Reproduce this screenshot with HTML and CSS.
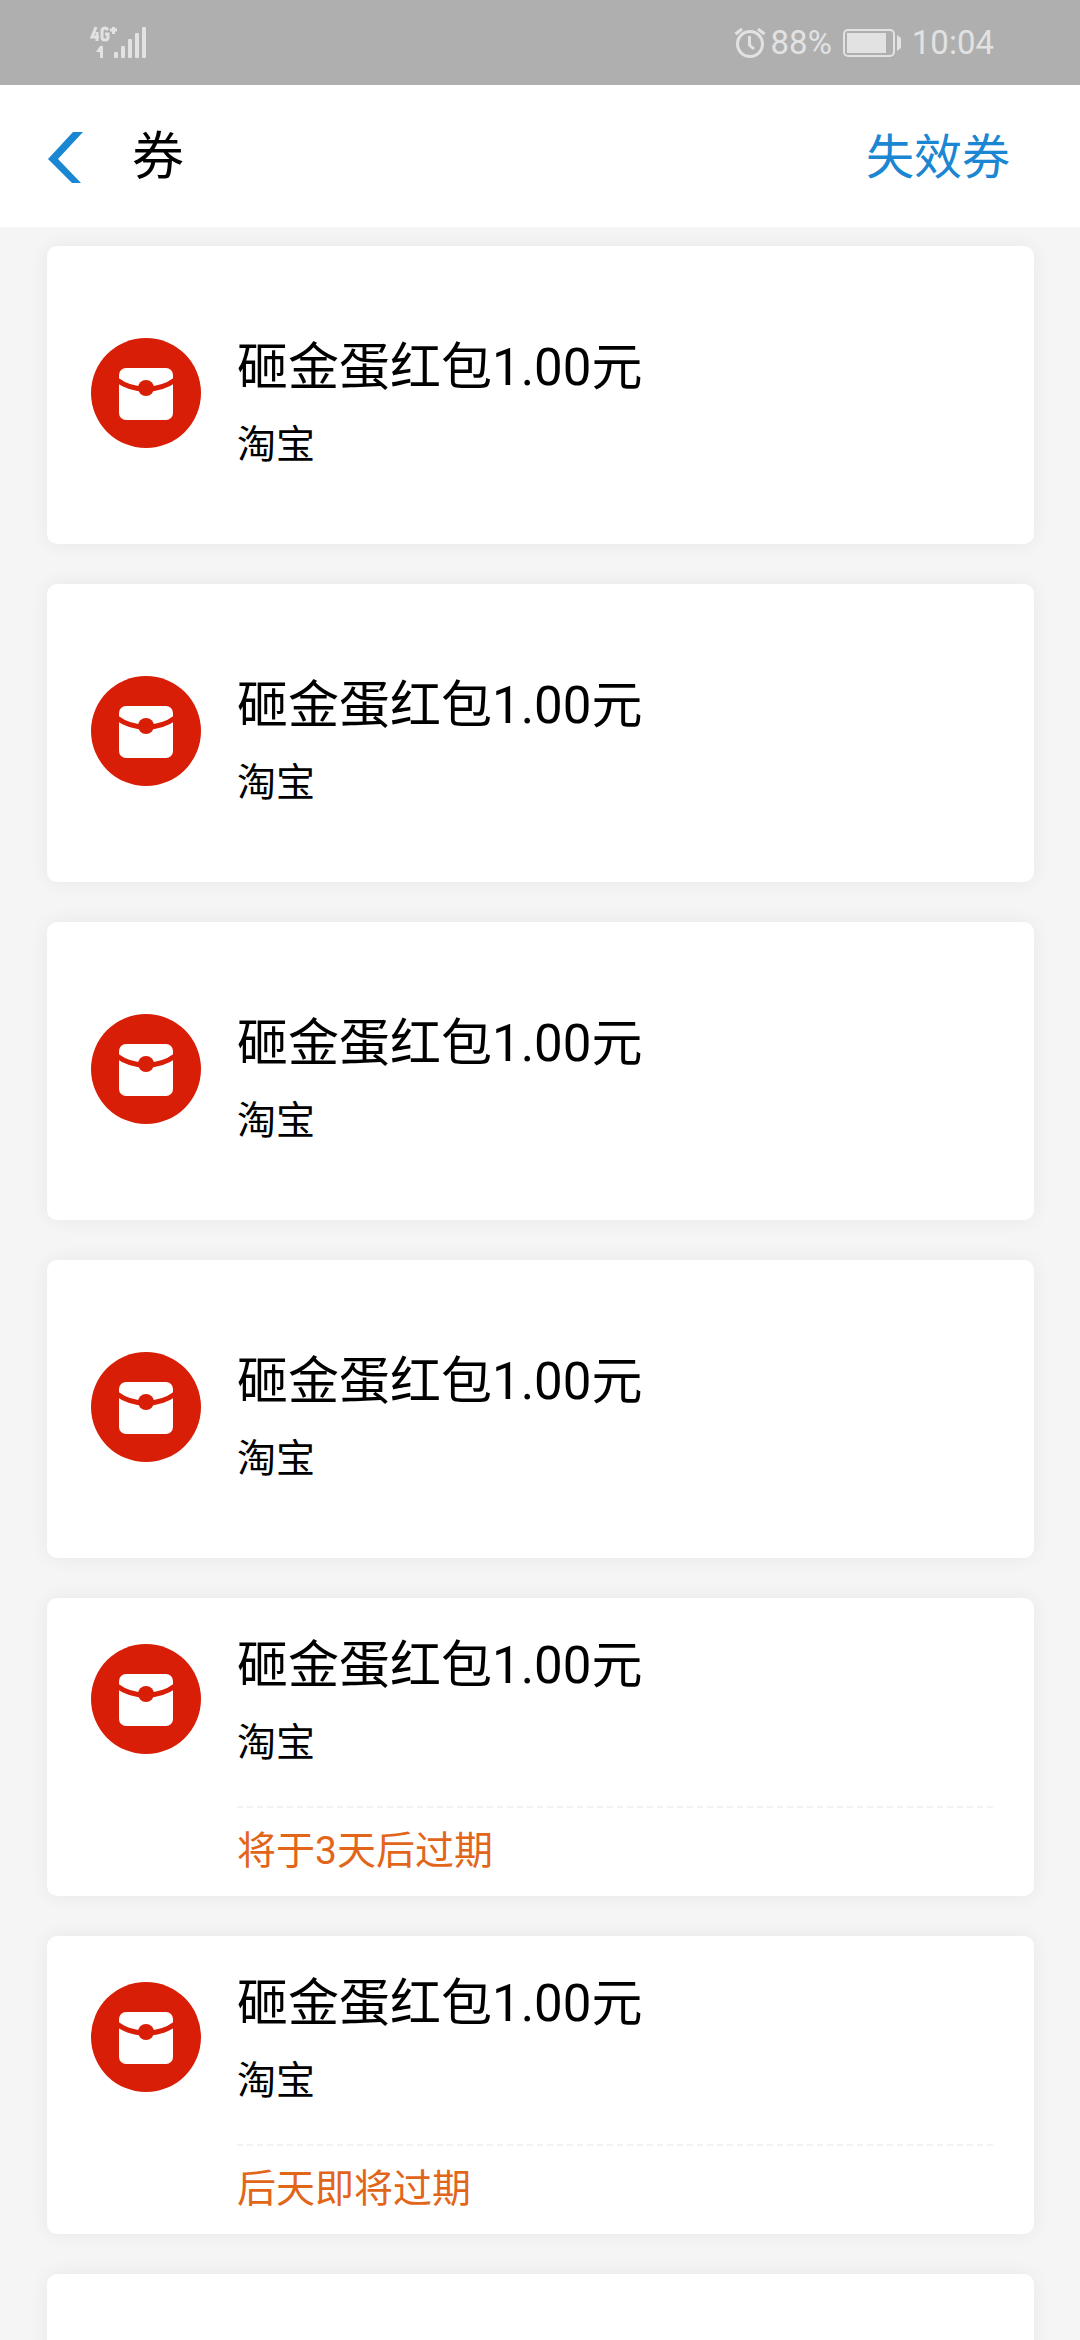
FILE: index.html
```html
<!DOCTYPE html>
<html lang="zh-CN">
<head>
<meta charset="utf-8">
<meta name="viewport" content="width=device-width, initial-scale=1">
<title>券</title>
<link rel="stylesheet" href="styles.css">
</head>
<body>
<svg class="defs" aria-hidden="true">
  <symbol id="packet" viewBox="0 0 110 110">
    <circle cx="55" cy="55" r="55" fill="#d81e06"/>
    <rect x="28" y="30" width="54" height="52" rx="7" fill="#fff"/>
    <path d="M26 42Q38 51 55 51T84 42" fill="none" stroke="#d81e06" stroke-width="5"/>
    <circle cx="55" cy="50" r="8" fill="#d81e06"/>
  </symbol>
</svg>
<div class="app">
  <div class="status">
    <svg class="signal" width="60" height="36" viewBox="0 0 60 36" fill="#e2e2e2" aria-label="4G+">
      <g fill="none" stroke="#e2e2e2" stroke-width="3">
        <path d="M8 1L4 11H11M9 6V15M20 4Q19 2 17 2Q14 2 14 5V11Q14 14 17 14Q20 14 20 11V8H17M22 4H29M25.500 1V8"/>
      </g>
      <path d="M8 26L12 20H15V32H12V26Z"/>
      <rect x="26" y="26" width="4" height="6" rx="1"/>
      <rect x="33" y="20" width="4" height="12" rx="1"/>
      <rect x="40" y="13" width="4" height="19" rx="1"/>
      <rect x="47" y="7" width="4" height="25" rx="1"/>
      <rect x="54" y="1" width="4" height="31" rx="1"/>
    </svg>
    <div class="status-info">
      <svg width="32" height="32" viewBox="0 0 32 32" fill="none" stroke="#e2e2e2" stroke-width="3" aria-hidden="true">
        <circle cx="16" cy="17" r="12.500"/>
        <path d="M15.500 9V18L20 22M1.500 7L8 2M30.500 7L24 2"/>
      </svg>
      <span>88%</span>
      <svg class="battery" width="58" height="28" viewBox="0 0 58 28" aria-hidden="true">
        <rect x="1" y="1" width="50" height="26" rx="4" fill="none" stroke="#e2e2e2" stroke-width="2"/>
        <rect x="4" y="4" width="39" height="20" fill="#e2e2e2"/>
        <path d="M54 6L58 9V19L54 22Z" fill="#e2e2e2"/>
      </svg>
      <time>10:04</time>
    </div>
  </div>

  <header class="bar">
    <button class="back" type="button" aria-label="返回">
      <svg width="36" height="52" viewBox="0 0 36 52" aria-hidden="true"><path d="M25 0H35L10 27L33 51H24L0 27Z" fill="#1b86d2"/></svg>
    </button>
    <h1>券</h1>
    <a class="expired" href="#expired">失效券</a>
  </header>

  <ul class="list">
    <li class="card">
      <svg class="icon" aria-hidden="true"><use href="#packet"/></svg>
      <div class="body"><h2>砸金蛋红包1.00元</h2><p>淘宝</p></div>
    </li>
    <li class="card">
      <svg class="icon" aria-hidden="true"><use href="#packet"/></svg>
      <div class="body"><h2>砸金蛋红包1.00元</h2><p>淘宝</p></div>
    </li>
    <li class="card">
      <svg class="icon" aria-hidden="true"><use href="#packet"/></svg>
      <div class="body"><h2>砸金蛋红包1.00元</h2><p>淘宝</p></div>
    </li>
    <li class="card">
      <svg class="icon" aria-hidden="true"><use href="#packet"/></svg>
      <div class="body"><h2>砸金蛋红包1.00元</h2><p>淘宝</p></div>
    </li>
    <li class="card expiring">
      <svg class="icon" aria-hidden="true"><use href="#packet"/></svg>
      <div class="body"><h2>砸金蛋红包1.00元</h2><p>淘宝</p><p class="due">将于3天后过期</p></div>
    </li>
    <li class="card expiring">
      <svg class="icon" aria-hidden="true"><use href="#packet"/></svg>
      <div class="body"><h2>砸金蛋红包1.00元</h2><p>淘宝</p><p class="due">后天即将过期</p></div>
    </li>
    <li class="card"></li>
  </ul>
</div>
</body>
</html>
```

FILE: styles.css
```css
* {
  box-sizing: border-box;
  margin: 0;
  padding: 0;
}

body {
  background: #f5f5f5;
  color: #000;
  font-family: Roboto, "Noto Sans CJK SC", sans-serif;
}

.defs {
  display: none;
}

.app {
  display: flex;
  flex-direction: column;
  height: 100vh;
  overflow: hidden;
}

.status {
  display: flex;
  flex: none;
  align-items: center;
  justify-content: space-between;
  height: 85px;
  padding: 0 86px 0 88px;
  background: #afafaf;
  color: #e2e2e2;
  font-size: 33px;
  line-height: 40px;
}

.signal {
  margin-top: 2px;
}

.status-info {
  display: flex;
  align-items: center;
  gap: 5px;
}

.battery {
  margin: 0 6px;
}

.bar {
  display: flex;
  flex: none;
  align-items: center;
  height: 142px;
  padding: 4px 70px 0 48px;
  background: #fff;
}

.back {
  display: flex;
  width: 84px;
  border: 0;
  background: none;
}

h1 {
  flex: 1;
  font-size: 52px;
  font-weight: 400;
  line-height: 60px;
}

.expired {
  color: #1b86d2;
  font-size: 48px;
  line-height: 60px;
  text-decoration: none;
}

.list {
  display: flex;
  flex: 1;
  flex-direction: column;
  gap: 40px;
  min-height: 0;
  padding: 19px 46px 0 47px;
  overflow: hidden;
  list-style: none;
}

.card {
  display: flex;
  flex: none;
  align-items: flex-start;
  gap: 36px;
  min-height: 298px;
  padding: 92px 41px 0 44px;
  border-radius: 10px;
  background: #fff;
  box-shadow: 0 0 20px rgba(0, 0, 0, 0.06);
}

.icon {
  flex: none;
  width: 110px;
  height: 110px;
}

.body {
  flex: 1;
}

h2 {
  font-size: 51px;
  font-weight: 400;
  line-height: 60px;
}

p {
  margin-top: 24px;
  font-size: 39px;
  line-height: 46px;
}

.expiring {
  padding-top: 38px;
}

.expiring .icon {
  margin-top: 8px;
}

.due {
  margin-top: 40px;
  padding-top: 20px;
  border-top: 2px dashed #f2f2f2;
  color: #e2661a;
}
```
